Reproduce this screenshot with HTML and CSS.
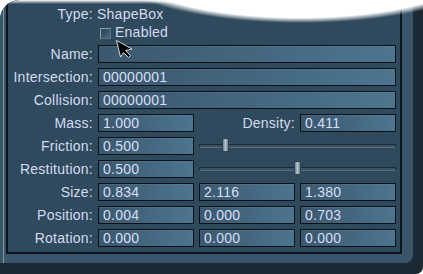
FILE: index.html
```html
<!DOCTYPE html>
<html lang="en">
<head>
    <meta charset="UTF-8">
    <meta name="viewport" content="width=device-width, initial-scale=1.0">
    <title>Shape properties</title>
    <link rel="stylesheet" href="styles.css">
</head>

<body>
    <div class="window">
        <div class="frame">
            <div class="panel">
                <!-- header: type and enabled flag -->
                <div class="row head">
                    <span class="label">Type:</span>
                    <span class="text wide">ShapeBox</span>
                </div>
                <div class="row head">
                    <span class="label"></span>
                    <span class="check wide"><span class="box"></span>Enabled</span>
                </div>

                <div class="fields">
                    <div class="row">
                        <span class="label">Name:</span>
                        <div class="field wide"></div>
                    </div>
                    <div class="row">
                        <span class="label">Intersection:</span>
                        <div class="field wide">00000001</div>
                    </div>
                    <div class="row">
                        <span class="label">Collision:</span>
                        <div class="field wide">00000001</div>
                    </div>
                    <div class="row">
                        <span class="label">Mass:</span>
                        <div class="field">1.000</div>
                        <span class="label">Density:</span>
                        <div class="field">0.411</div>
                    </div>
                    <div class="row">
                        <span class="label">Friction:</span>
                        <div class="field">0.500</div>
                        <div class="slider">
                            <div class="track"></div>
                            <div class="thumb" style="left: 11.5%;"></div>
                        </div>
                    </div>
                    <div class="row">
                        <span class="label">Restitution:</span>
                        <div class="field">0.500</div>
                        <div class="slider">
                            <div class="track"></div>
                            <div class="thumb" style="left: 48%;"></div>
                        </div>
                    </div>
                    <div class="row">
                        <span class="label">Size:</span>
                        <div class="field">0.834</div>
                        <div class="field">2.116</div>
                        <div class="field">1.380</div>
                    </div>
                    <div class="row">
                        <span class="label">Position:</span>
                        <div class="field">0.004</div>
                        <div class="field">0.000</div>
                        <div class="field">0.703</div>
                    </div>
                    <div class="row">
                        <span class="label">Rotation:</span>
                        <div class="field">0.000</div>
                        <div class="field">0.000</div>
                        <div class="field">0.000</div>
                    </div>
                </div>
            </div>
        </div>

        <div class="glare"></div>

        <svg class="cursor" width="20" height="22" viewBox="0 0 20 22">
            <path d="M1.5 1.5 L5.5 18 L8.5 13.5 L13.5 18.5 L15.5 16.5 L10.5 11.5 L17 10 Z" fill="#000" stroke="#e8ecf0" stroke-width="0.9" stroke-linejoin="round"/>
        </svg>
    </div>
</body>
</html>
```

FILE: styles.css
```css
body {
    margin: 0;
    background: #fff;
    font-family: "Liberation Sans", Arial, sans-serif;
    font-size: 14px;
}

.window {
    position: relative;
    width: 423px;
    height: 274px;
    background: #1b2934; /* outer dark edge */
    border-radius: 20px 0 7px 0;
    overflow: hidden;
}

/* raised bevel around the panel */
.frame {
    width: 413px;
    height: 263px;
    box-sizing: border-box;
    padding-left: 6px;
    background: #39556a;
    border-radius: 0 0 8px 0;
    box-shadow: inset 3px 0 0 #39556a, inset 4px 0 0 #8694a1;
}

.panel {
    width: 396px;
    height: 254px;
    box-sizing: border-box;
    border: 2px solid #0d141a;
    border-top: none;
    background: #2f4a5c;
    padding: 5px 3px 0 0;
}

.row {
    display: grid;
    grid-template-columns: 85px 96px 96px 96px;
    column-gap: 5px;
    height: 18px;
    line-height: 18px;
    color: #d5daf1;
    letter-spacing: 0.25px;
}

.head:last-child {
    margin-bottom: 4px;
}

.label {
    text-align: right;
    white-space: nowrap;
}

.wide {
    grid-column: 2 / 5;
}

.text {
    margin-left: -1px;
}

.check {
    display: flex;
    align-items: flex-start;
    gap: 4px;
    margin-left: 2px;
}

.check .box {
    width: 9px;
    height: 9px;
    margin-top: 5px;
    border: 1px solid #8e9cab;
    border-right-color: #5d6f7e;
    border-bottom-color: #5d6f7e;
    background: linear-gradient(135deg, #27404f, #4a6b82);
}

.fields {
    display: flex;
    flex-direction: column;
    gap: 5px;
    margin-top: 4px;
}

.field {
    box-sizing: border-box;
    height: 18px;
    line-height: 16px;
    padding-left: 4px;
    border: 1px solid #0b1117;
    background: linear-gradient(to right, #3a586e, #4d7590);
    box-shadow: inset 0 1px 0 rgba(255, 255, 255, 0.06);
    color: #d8def4;
    overflow: hidden;
}

.slider {
    grid-column: 3 / 5;
    position: relative;
}

.track {
    position: absolute;
    left: 0;
    right: 0;
    top: 7px;
    height: 2px;
    border: 1px solid #1b2a35;
    border-bottom-color: #56707f;
    background: #38525f;
}

.thumb {
    position: absolute;
    top: 1px;
    width: 7px;
    height: 14px;
    box-sizing: border-box;
    border: 1px solid #31424e;
    border-radius: 2px;
    background: linear-gradient(to right, #6c8293, #b4c3ce 50%, #6c8293);
}

/* white curved blur over the top edge */
.glare {
    position: absolute;
    left: 0;
    top: 0;
    width: 423px;
    height: 40px;
    background:
        radial-gradient(200px 60px at 300px -37px, #fff 91%, rgba(255, 255, 255, 0) 100%),
        linear-gradient(#fff, rgba(255, 255, 255, 0) 4px);
    pointer-events: none;
}

.cursor {
    position: absolute;
    left: 115px;
    top: 39px;
}
```
